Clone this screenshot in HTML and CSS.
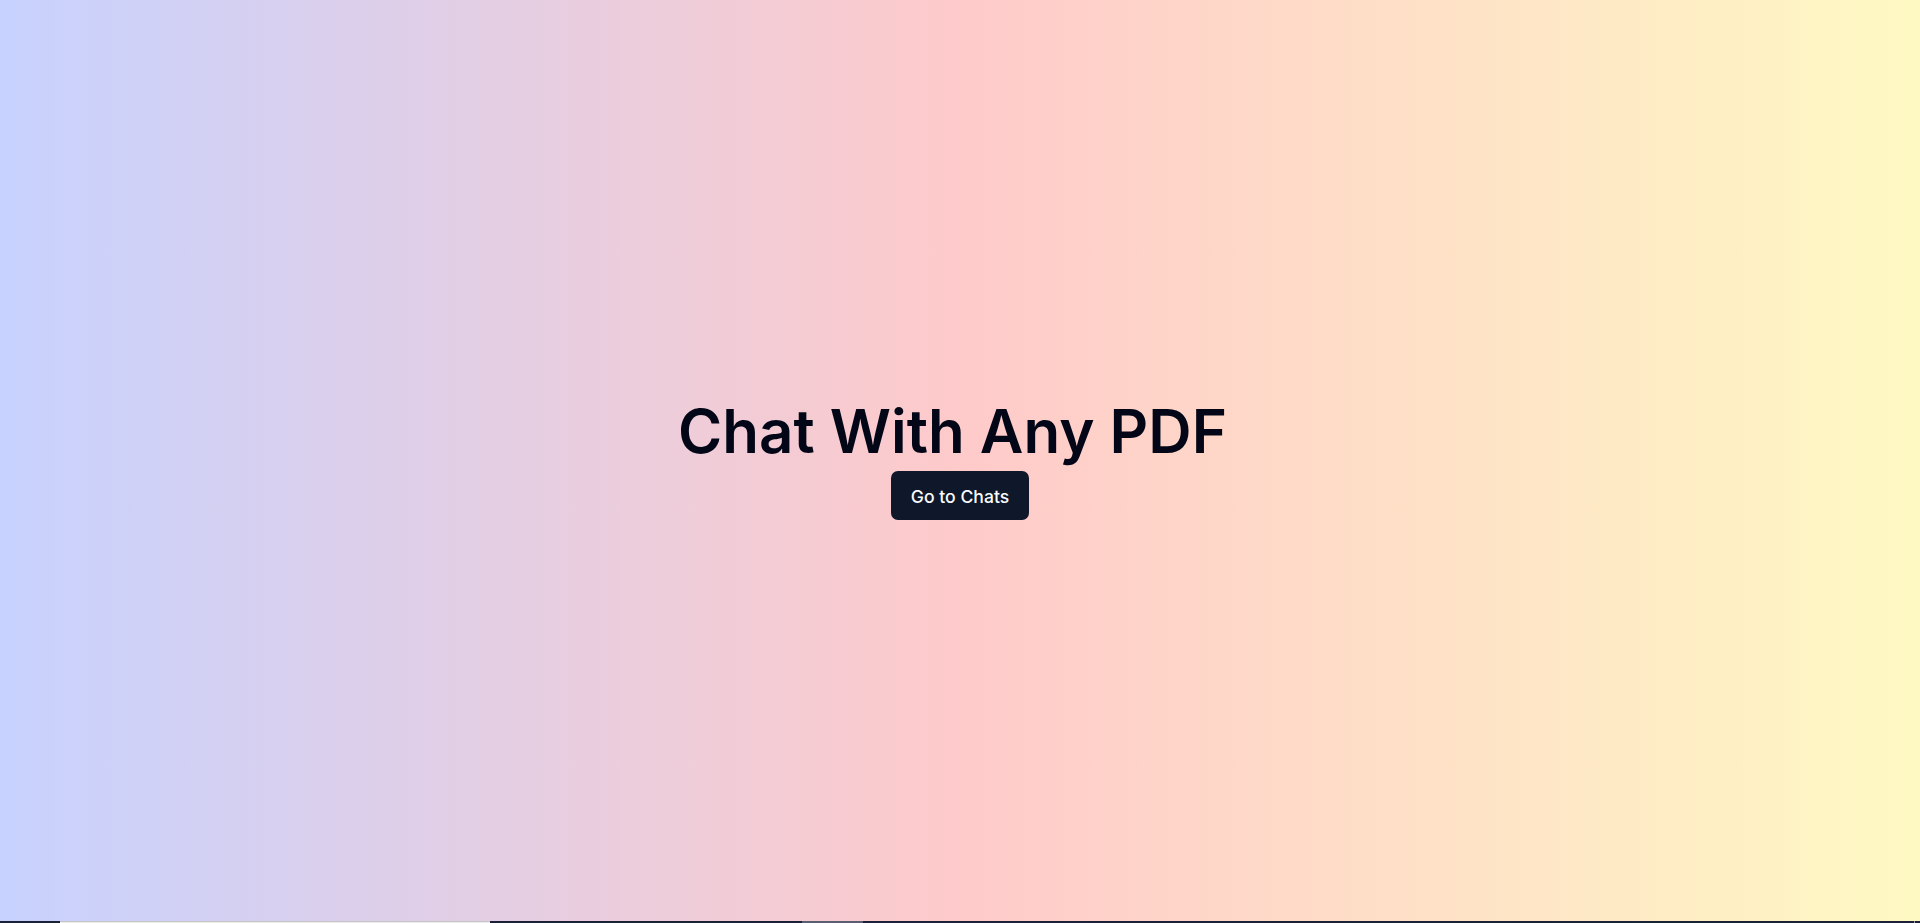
FILE: index.html
```html
<!DOCTYPE html>
<html lang="en">
<head>
<meta charset="utf-8">
<title>Chat With Any PDF</title>
<link rel="stylesheet" href="styles.css">
</head>
<body>
<div class="page">
  <main class="hero">
    <div class="title-row">
      <h1 class="title">Chat With Any PDF</h1>
    </div>
    <button class="btn">Go to Chats</button>
  </main>
  <div class="strip">
    <span class="seg dark w60"></span>
    <span class="seg light w430"></span>
    <span class="seg dark w312"></span>
    <span class="seg gray w61"></span>
    <span class="seg dark grow"></span>
    <span class="seg tick"></span>
    <span class="seg dark w5"></span>
  </div>
</div>
</body>
</html>
```
FILE: styles.css
```css
* { box-sizing: border-box; }
html, body { margin: 0; padding: 0; height: 100%; }
body {
  font-family: Inter, "Noto Sans", sans-serif;
  overflow: hidden;
}
.page {
  height: 923px;
  display: flex;
  flex-direction: column;
}
.hero {
  flex: 1;
  display: flex;
  flex-direction: column;
  align-items: center;
  justify-content: center;
  background: linear-gradient(to right, #c7d2fe, #fecaca, #fef9c3);
}
.title-row {
  display: flex;
  align-items: center;
}
.title {
  margin: 0 15px 0 0;
  font-size: 60px;
  line-height: 60px;
  font-weight: 600;
  color: #020617;
  letter-spacing: 0;
}
.btn {
  margin-top: 10px;
  height: 49px;
  padding: 1px 20px 0;
  border: none;
  border-radius: 7px;
  background: #0f172a;
  color: #f8fafc;
  font-family: Inter, "Noto Sans", sans-serif;
  font-size: 17.6px;
  font-weight: 500;
  cursor: pointer;
}
.strip {
  height: 2px;
  display: flex;
}
.seg { height: 2px; display: block; }
.dark { background: #1b2136; }
.light { background: linear-gradient(#c6c6c6 50%, #ececec 50%); }
.gray { background: #5b5d70; }
.tick { width: 1px; background: #9a9aa6; }
.w60 { width: 60px; }
.w430 { width: 430px; }
.w312 { width: 312px; }
.w61 { width: 61px; }
.w5 { width: 5px; }
.grow { flex: 1; }
```
